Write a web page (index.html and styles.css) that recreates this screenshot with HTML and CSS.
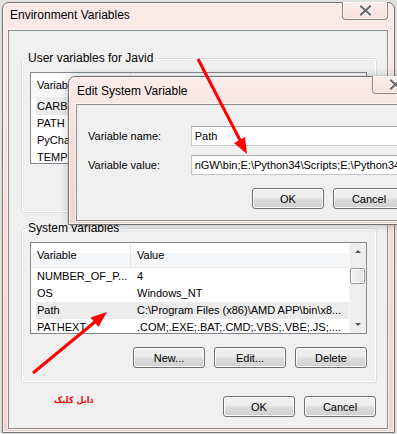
FILE: index.html
```html
<!DOCTYPE html>
<html lang="en">
<head>
    <meta charset="UTF-8">
    <meta name="viewport" content="width=device-width, initial-scale=1.0">
    <title>Environment Variables</title>
    <link rel="stylesheet" href="styles.css">
</head>
<body>
    <div class="window env">
        <div class="titlebar">
            <span class="title">Environment Variables</span>
            <div class="close">
                <svg width="13" height="11" viewBox="0 0 13 11">
                    <path d="M2 1.5 L11 9.5 M11 1.5 L2 9.5" stroke="#fff" stroke-width="4.4" stroke-linecap="square"/>
                    <path d="M2 1.5 L11 9.5 M11 1.5 L2 9.5" stroke="#6a6a6a" stroke-width="2.2" stroke-linecap="square"/>
                </svg>
            </div>
        </div>
        <div class="client">
            <fieldset class="group user">
                <legend>User variables for Javid</legend>
                <div class="list">
                    <div class="rows">
                        <div class="head">
                            <span class="col-name">Variable</span>
                        </div>
                        <div class="row sel"><span class="col-name">CARBON_HOME</span></div>
                        <div class="row"><span class="col-name">PATH</span></div>
                        <div class="row"><span class="col-name">PyCharm</span></div>
                        <div class="row"><span class="col-name">TEMP</span></div>
                    </div>
                </div>
                <!-- the user New/Edit/Delete row sits under the edit dialog -->
                <div class="actions-space"></div>
            </fieldset>

            <fieldset class="group system">
                <legend>System variables</legend>
                <div class="list">
                    <div class="rows">
                        <div class="head">
                            <span class="col-name">Variable</span>
                            <span class="col-val">Value</span>
                        </div>
                        <div class="row"><span class="col-name">NUMBER_OF_P...</span><span class="col-val">4</span></div>
                        <div class="row"><span class="col-name">OS</span><span class="col-val">Windows_NT</span></div>
                        <div class="row sel"><span class="col-name">Path</span><span class="col-val">C:\Program Files (x86)\AMD APP\bin\x8...</span></div>
                        <div class="row"><span class="col-name">PATHEXT</span><span class="col-val">.COM;.EXE;.BAT;.CMD;.VBS;.VBE;.JS;....</span></div>
                    </div>
                    <div class="scrollbar">
                        <div class="arrow up"></div>
                        <div class="track"><div class="thumb"></div></div>
                        <div class="arrow down"></div>
                    </div>
                </div>
                <div class="actions">
                    <button class="btn">New...</button>
                    <button class="btn">Edit...</button>
                    <button class="btn">Delete</button>
                </div>
            </fieldset>

            <div class="footer">
                <span class="note" dir="rtl">دابل کلیک</span>
                <div class="footer-buttons">
                    <button class="btn">OK</button>
                    <button class="btn">Cancel</button>
                </div>
            </div>
        </div>
    </div>

    <div class="window edit">
        <div class="titlebar">
            <span class="title">Edit System Variable</span>
            <div class="close">
                <svg width="13" height="11" viewBox="0 0 13 11">
                    <path d="M2 1.5 L11 9.5 M11 1.5 L2 9.5" stroke="#fff" stroke-width="4.4" stroke-linecap="square"/>
                    <path d="M2 1.5 L11 9.5 M11 1.5 L2 9.5" stroke="#6a6a6a" stroke-width="2.2" stroke-linecap="square"/>
                </svg>
            </div>
        </div>
        <div class="client">
            <div class="field">
                <label>Variable name:</label>
                <div class="textbox">Path</div>
            </div>
            <div class="field">
                <label>Variable value:</label>
                <div class="textbox">nGW\bin;E:\Python34\Scripts;E:\Python34\;C:\Python27</div>
            </div>
            <div class="dlg-buttons">
                <button class="btn">OK</button>
                <button class="btn">Cancel</button>
            </div>
        </div>
    </div>

    <!-- red annotation arrows drawn on top of the screenshot -->
    <svg class="arrows" width="397" height="434" viewBox="0 0 397 434">
        <line x1="198" y1="59" x2="241" y2="142" stroke="#ff0000" stroke-width="3"/>
        <polygon points="247,154 245,137 234,143" fill="#ff0000"/>
        <line x1="33" y1="373" x2="96" y2="321" stroke="#ff0000" stroke-width="3"/>
        <polygon points="107,312 98.5,327 90.5,317.5" fill="#ff0000"/>
    </svg>
</body>
</html>
```

FILE: styles.css
```css
* {
    box-sizing: border-box;
}

body {
    margin: 0;
    width: 397px;
    height: 434px;
    overflow: hidden;
    position: relative;
    background: #e2dfdf;
    font-family: "Liberation Sans", Arial, sans-serif;
    font-size: 11px;
    color: #000;
}

/* window frames */
.window {
    display: flex;
    flex-direction: column;
    border: 1px solid #6f6f6f;
    border-radius: 7px 7px 0 0;
    background: linear-gradient(#fbebe8, #f3dad6 60%, #f0d4d0);
    box-shadow: inset 0 0 0 1px rgba(255, 255, 255, 0.75);
}

.env {
    margin: 2px 0 0 2px;
    width: 393px;
    height: 431px;
    padding: 0 6px 3px 5px;
}

.edit {
    position: absolute;
    left: 68px;
    top: 76px;
    width: 360px;
    height: 149px;
    padding: 0 6px 3px 7px;
    box-shadow: inset 0 0 0 1px rgba(255, 255, 255, 0.75), 0 0 8px rgba(0, 0, 0, 0.25);
}

.titlebar {
    height: 27px;
    flex-shrink: 0;
    display: flex;
    justify-content: space-between;
    align-items: flex-start;
}

.title {
    font-size: 12px;
    line-height: 16px;
}

.env .title {
    padding: 4px 0 0 2px;
}

.edit .title {
    padding: 6px 0 0 1px;
}

.close {
    width: 46px;
    height: 18px;
    margin-top: -1px;
    border: 1px solid #8d8585;
    border-top: none;
    border-radius: 0 0 4px 4px;
    background: linear-gradient(#fdeeec, #f6e0dd);
    box-shadow: inset 0 0 0 1px rgba(255, 255, 255, 0.6);
    display: flex;
    justify-content: center;
    align-items: center;
}

.edit .close {
    margin-right: 3px;
}

.client {
    flex: 1;
    border: 1px solid #8c8c8c;
    background: #f0f0f0;
    box-shadow: 0 0 0 1px rgba(255, 255, 255, 0.6);
}

/* group boxes */
.group {
    margin: 0 10px 0 12px;
    padding: 6px 9px 14px 8px;
    border: 1px solid #d5dfe5;
    border-radius: 3px;
    min-width: 0;
    box-shadow: inset 0 0 0 1px #fff;
}

.group.user {
    margin-top: 19px;
}

.group.system {
    margin-top: 7px;
}

.group legend {
    margin-left: -4px;
    padding: 0 2px;
    font-size: 12px;
    line-height: 16px;
}

.list {
    height: 92px;
    border: 1px solid #828790;
    background: #fff;
    display: flex;
    overflow: hidden;
}

.rows {
    flex: 1;
    min-width: 0;
}

.head {
    height: 25px;
    display: flex;
    align-items: center;
    background: linear-gradient(#fff 40%, #f5f6f7 40%, #f5f6f7);
    border-bottom: 1px solid #eaeaea;
}

.head .col-name {
    width: 100px;
    padding-left: 6px;
    border-right: 1px solid #e3e5e8;
    line-height: 24px;
}

.head .col-val {
    padding-left: 6px;
}

.row {
    display: flex;
    height: 17px;
    line-height: 17px;
    margin-left: 5px;
    white-space: nowrap;
    overflow: hidden;
}

.row.sel {
    background: #ececec;
}

.row .col-name {
    width: 95px;
    padding-left: 1px;
    flex-shrink: 0;
}

.row .col-val {
    padding-left: 6px;
}

/* vertical scrollbar of the system list */
.scrollbar {
    width: 17px;
    flex-shrink: 0;
    display: flex;
    flex-direction: column;
    background: #eeeeee;
    border-left: 1px solid #f7f7f7;
}

.arrow {
    height: 17px;
    display: flex;
    justify-content: center;
    align-items: center;
}

.arrow::before {
    content: "";
    border-left: 3px solid transparent;
    border-right: 3px solid transparent;
}

.arrow.up::before {
    border-bottom: 3px solid #555;
}

.arrow.down::before {
    border-top: 3px solid #555;
}

.track {
    flex: 1;
    padding-top: 8px;
}

.thumb {
    width: 15px;
    height: 16px;
    border: 1px solid #979797;
    border-radius: 2px;
    background: linear-gradient(90deg, #f3f3f3, #e4e4e4);
    box-shadow: inset 0 0 0 1px #fff;
}

.actions {
    display: flex;
    justify-content: flex-end;
    gap: 9px;
    margin-top: 13px;
}

.actions-space {
    height: 34px;
}

/* buttons */
.btn {
    width: 72px;
    height: 21px;
    padding: 0;
    border: 1px solid #707070;
    border-radius: 3px;
    background: linear-gradient(#f2f2f2, #ebebeb 48%, #dddddd 52%, #cfcfcf);
    box-shadow: inset 0 0 0 1px #fcfcfc;
    font-family: "Liberation Sans", Arial, sans-serif;
    font-size: 11px;
    color: #000;
}

.footer {
    display: flex;
    justify-content: space-between;
    align-items: flex-start;
    margin-top: 13px;
    padding: 0 11px 0 45px;
}

.note {
    margin-top: -3px;
    font-family: "DejaVu Sans Condensed", "DejaVu Sans", sans-serif;
    font-weight: bold;
    font-size: 9px;
    line-height: 14px;
    color: #ff0000;
}

.footer-buttons {
    display: flex;
    gap: 9px;
}

/* edit dialog body */
.edit .client {
    padding: 21px 0 0 11px;
}

.field {
    display: flex;
    align-items: center;
    height: 20px;
}

.field + .field {
    margin-top: 9px;
}

.field label {
    width: 103px;
}

.textbox {
    width: 230px;
    height: 20px;
    padding: 0 3px;
    line-height: 18px;
    border: 1px solid #c3c6cc;
    border-top-color: #abadb3;
    background: #fff;
    white-space: nowrap;
    overflow: hidden;
}

.dlg-buttons {
    display: flex;
    gap: 9px;
    margin-top: 13px;
    padding-left: 164px;
}

.arrows {
    position: absolute;
    left: 0;
    top: 0;
    pointer-events: none;
}
```
